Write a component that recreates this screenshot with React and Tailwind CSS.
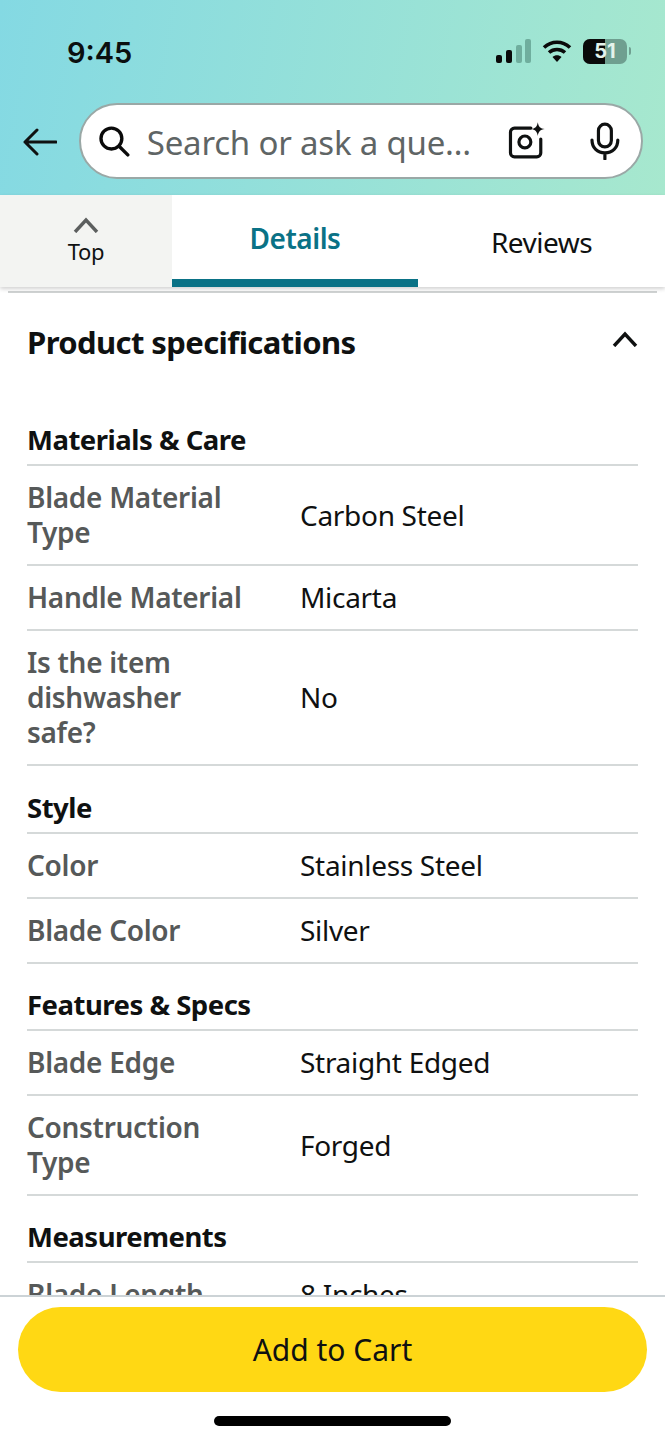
const FONT = "font-['Noto_Sans',sans-serif]"

const SECTIONS = [
  {
    title: 'Materials & Care',
    rows: [
      ['Blade Material Type', 'Carbon Steel'],
      ['Handle Material', 'Micarta'],
      ['Is the item dishwasher safe?', 'No'],
    ],
  },
  {
    title: 'Style',
    rows: [
      ['Color', 'Stainless Steel'],
      ['Blade Color', 'Silver'],
    ],
  },
  {
    title: 'Features & Specs',
    rows: [
      ['Blade Edge', 'Straight Edged'],
      ['Construction Type', 'Forged'],
    ],
  },
  {
    title: 'Measurements',
    rows: [['Blade Length', '8 Inches']],
  },
]

// section headings aren't all the same height in the picture
const HEADING_PADDING = ['pt-0 pb-[7px]', 'pt-[24px] pb-[7px]', 'pt-[23px] pb-[7px]', 'pt-[23px] pb-[7px]']

function StatusBar() {
  return (
    <div className="h-[103px] pl-[67px] pr-[34px] pt-[35px] flex justify-between items-start">
      <span className="font-['Inter',sans-serif] text-[29px] leading-[36px] font-semibold text-[#0b0f0f]">9:45</span>
      <div className="flex items-center gap-[11px] pt-[3px]">
        <svg width="36" height="26" viewBox="0 0 36 26">
          <rect x="1" y="17" width="6" height="8" rx="2" fill="#0a0a0a" />
          <rect x="11" y="12" width="6" height="13" rx="2" fill="#0a0a0a" />
          <rect x="21" y="7" width="6" height="18" rx="2" fill="#6fae9e" />
          <rect x="30" y="1" width="6" height="24" rx="2" fill="#6fae9e" />
        </svg>
        <svg width="30" height="24" viewBox="0 0 30 24" fill="none" stroke="#0a0a0a" strokeWidth="3.6">
          <path d="M2 8.5C9.5 1.500 20.500 1.500 28 8.500" />
          <path d="M7 13.500C11.500 9.500 18.500 9.500 23 13.500" />
          <path d="M15 23L10.500 18C13 15.700 17 15.700 19.500 18Z" fill="#0a0a0a" stroke="none" />
        </svg>
        <div className="flex items-center gap-[2px]">
          <div className="relative w-[44px] h-[25px] rounded-[7px] overflow-hidden bg-[#6f9f90] flex items-center justify-center">
            <div className="absolute left-0 top-0 bottom-0 w-[22px] bg-[#0a0a0a]" />
            <span className="relative font-['Inter',sans-serif] text-[20px] leading-[25px] font-bold text-[#e4f3ec]">51</span>
          </div>
          <div className="w-[2px] h-[8px] rounded-r-full bg-[#6f9f90]" />
        </div>
      </div>
    </div>
  )
}

function SearchBar() {
  return (
    <div className="flex items-start pl-[23px]">
      <svg className="mt-[25px]" width="34" height="28" viewBox="0 0 34 28" fill="none" stroke="#0f1111" strokeWidth="3" strokeLinecap="round" strokeLinejoin="round">
        <path d="M33 14H2M14 2L2 14L14 26" />
      </svg>
      <div className="ml-[22px] w-[564px] h-[76px] rounded-full bg-white border-2 border-[#9aa8a6] flex items-center pl-[17px] pr-[21px]">
        <svg width="32" height="32" viewBox="0 0 32 32" fill="none" stroke="#0a0a0a" strokeWidth="3.400" strokeLinecap="round">
          <circle cx="13.500" cy="13.500" r="10.500" />
          <path d="M21.500 21.500L30 30" />
        </svg>
        <span className={`${FONT} ml-[17px] pt-[3px] w-[330px] text-[33px] leading-[44px] tracking-[-0.2px] text-[#5f6565] whitespace-nowrap overflow-hidden`}>Search or ask a que…</span>
        <svg className="ml-[34px]" width="38" height="38" viewBox="0 0 38 38" fill="none" stroke="#0f1111" strokeWidth="3.200" strokeLinecap="round">
          <path d="M23 6H6.500A4 4 0 0 0 2.500 10V31A4 4 0 0 0 6.500 35H29A4 4 0 0 0 33 31V17" />
          <circle cx="17" cy="20" r="6" />
          <path d="M30 0C30.800 4.600 32.400 6.200 37 7C32.400 7.800 30.800 9.400 30 14C29.200 9.400 27.600 7.800 23 7C27.600 6.200 29.200 4.600 30 0Z" fill="#0f1111" stroke="none" />
        </svg>
        <svg className="ml-[44px]" width="30" height="38" viewBox="0 0 30 38" fill="none" stroke="#0f1111" strokeWidth="3.200" strokeLinecap="round">
          <rect x="8.500" y="2" width="13" height="23" rx="6.500" />
          <path d="M2 18C2 26 7.500 31 15 31C22.500 31 28 26 28 18M15 31V37" />
        </svg>
      </div>
    </div>
  )
}

function Tabs() {
  return (
    <div className={`${FONT} h-[92px] flex bg-white shadow-[0_2px_4px_rgba(0,0,0,0.18)] relative`}>
      <div className="w-[172px] bg-[#f3f4f2] flex flex-col items-center pt-[22px]">
        <svg width="26" height="16" viewBox="0 0 26 16" fill="none" stroke="#5c5f5f" strokeWidth="3.400">
          <path d="M2 15L13 3L24 15" />
        </svg>
        <span className="mt-[4px] text-[22px] leading-[28px] tracking-[-0.4px] text-[#0f1111]">Top</span>
      </div>
      <div className="w-[246px] border-b-[8px] border-[#0a7286] text-center pt-[24px]">
        <span className="text-[28px] leading-[38px] font-semibold tracking-[-0.5px] text-[#0a7286]">Details</span>
      </div>
      <div className="flex-1 text-center pt-[28px]">
        <span className="text-[28px] leading-[38px] tracking-[-0.5px] text-[#0f1111]">Reviews</span>
      </div>
    </div>
  )
}

function SpecRow({ label, value }) {
  return (
    <div className="flex items-center border-b-2 border-[#d5d9d9] py-[14px]">
      <div className="w-[273px] pr-[50px] text-[28px] leading-[35px] font-semibold tracking-[-0.3px] text-[#565959]">{label}</div>
      <div className="text-[28px] leading-[35px] tracking-[-0.3px] text-[#0f1111]">{value}</div>
    </div>
  )
}

export default function App() {
  return (
    <div className={`${FONT} w-[665px] h-[1440px] flex flex-col bg-white overflow-hidden`}>
      <div className="h-[195px] shrink-0 bg-[linear-gradient(100deg,#84d9e3,#a7e8ce)]">
        <StatusBar />
        <SearchBar />
      </div>
      <Tabs />
      <div className="flex-1 min-h-0 overflow-hidden">
        <div className="mx-[8px] mt-[4px] h-[2px] bg-[#d0d3d3]" />
        <div className="px-[27px]">
          <div className="flex justify-between items-start pt-[28px] h-[129px]">
            <h2 className="text-[31px] leading-[42px] font-bold tracking-[-0.6px] text-[#0f1111]">Product specifications</h2>
            <svg className="mt-[10px]" width="26" height="16" viewBox="0 0 26 16" fill="none" stroke="#0f1111" strokeWidth="3.400">
              <path d="M2 15L13 3L24 15" />
            </svg>
          </div>
          {SECTIONS.map((section, i) => (
            <div key={section.title}>
              <div className={`${HEADING_PADDING[i]} border-b-2 border-[#d5d9d9] text-[27.5px] leading-[35px] font-bold tracking-[-0.5px] text-[#0f1111]`}>
                {section.title}
              </div>
              {section.rows.map(([label, value]) => (
                <SpecRow key={label} label={label} value={value} />
              ))}
            </div>
          ))}
        </div>
      </div>
      <div className="h-[145px] shrink-0 bg-white border-t-2 border-[#ccd3d6] flex flex-col items-center">
        <button className="mt-[10px] w-[629px] h-[85px] rounded-full bg-[#ffd814] text-[30px] leading-[38px] text-[#0f1111]">Add to Cart</button>
        <div className="mt-[24px] w-[237px] h-[10px] rounded-full bg-black" />
      </div>
    </div>
  )
}
